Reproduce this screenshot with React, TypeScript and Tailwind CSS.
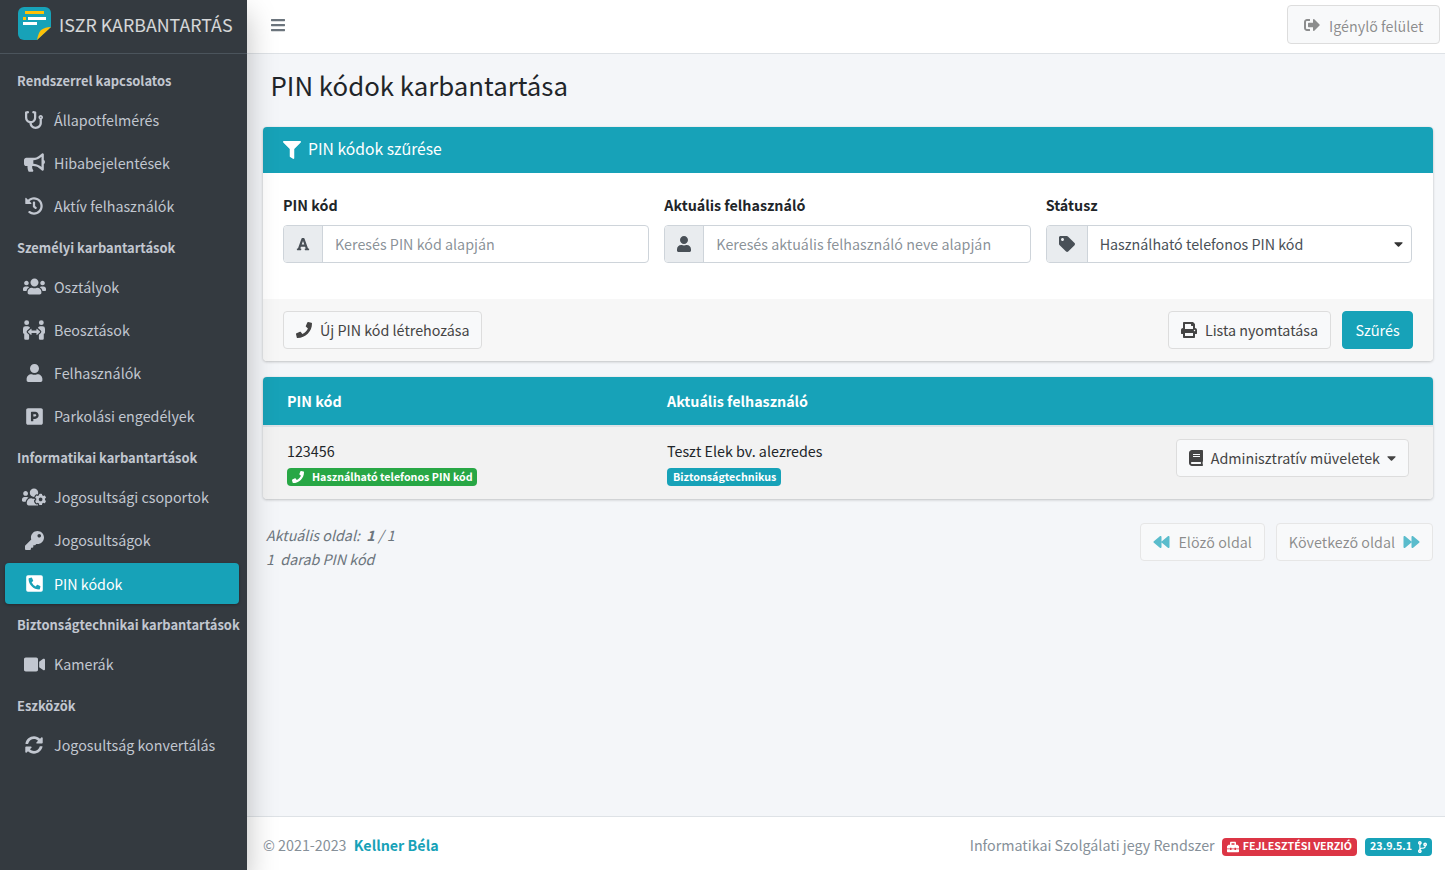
import type { ReactNode } from 'react';
import {
  FaBackward, FaBars, FaBook, FaBullhorn, FaCaretDown, FaCodeBranch, FaFilter, FaFont, FaForward, FaHistory, FaKey,
  FaParking, FaPeopleArrows, FaPhone, FaPhoneSquareAlt, FaPrint, FaSignOutAlt, FaStethoscope, FaSyncAlt, FaTag,
  FaToolbox, FaUser, FaUsers, FaUsersCog, FaVideo,
} from 'react-icons/fa';

const nav: { title: string; items: { label: string; icon: ReactNode; active?: boolean }[] }[] = [
  {
    title: 'Rendszerrel kapcsolatos',
    items: [
      { label: 'Állapotfelmérés', icon: <FaStethoscope className="w-[18px] h-[18px]" /> },
      { label: 'Hibabejelentések', icon: <FaBullhorn className="w-[21px] h-[21px]" /> },
      { label: 'Aktív felhasználók', icon: <FaHistory className="w-[18px] h-[18px]" /> },
    ],
  },
  {
    title: 'Személyi karbantartások',
    items: [
      { label: 'Osztályok', icon: <FaUsers className="w-[23px] h-[23px]" /> },
      { label: 'Beosztások', icon: <FaPeopleArrows className="w-[22px] h-[22px]" /> },
      { label: 'Felhasználók', icon: <FaUser className="w-[17px] h-[18px]" /> },
      { label: 'Parkolási engedélyek', icon: <FaParking className="w-[17px] h-[19px]" /> },
    ],
  },
  {
    title: 'Informatikai karbantartások',
    items: [
      { label: 'Jogosultsági csoportok', icon: <FaUsersCog className="w-[24px] h-[24px]" /> },
      { label: 'Jogosultságok', icon: <FaKey className="w-[19px] h-[19px]" /> },
      { label: 'PIN kódok', icon: <FaPhoneSquareAlt className="w-[17px] h-[19px]" />, active: true },
    ],
  },
  {
    title: 'Biztonságtechnikai karbantartások',
    items: [{ label: 'Kamerák', icon: <FaVideo className="w-[21px] h-[21px]" /> }],
  },
  {
    title: 'Eszközök',
    items: [{ label: 'Jogosultság konvertálás', icon: <FaSyncAlt className="w-[18px] h-[18px]" /> }],
  },
];

function Logo() {
  return (
    <svg viewBox="0 0 33 33" className="w-[33px] h-[33px] shrink-0 mb-[6px]">
      <path d="M6 0h21a6 6 0 0 1 6 6v14L19 33H6a6 6 0 0 1-6-6V6a6 6 0 0 1 6-6z" fill="#17a2b8" />
      <path d="M33 20L19 33C20 28 21 25 23 23C26 21 29 20 33 20z" fill="#ffc107" />
      <rect x="7" y="4" width="19" height="3" fill="#ffc107" />
      <rect x="5" y="10" width="3" height="3" fill="#ffc107" />
      <rect x="10" y="10" width="18" height="3" fill="#fff" />
      <rect x="5" y="15" width="14" height="3" fill="#fff" />
    </svg>
  );
}

function Sidebar() {
  return (
    <aside className="w-[247px] shrink-0 bg-[#343a40] flex flex-col shadow-[0_14px_28px_rgba(0,0,0,0.25)] z-10">
      <div className="h-[54px] flex items-center pl-[18px] border-b border-[#4b545c]">
        <Logo />
        <span className="ml-2 mb-[6px] text-[17.8px] leading-[30px] text-white/80 whitespace-nowrap">ISZR KARBANTARTÁS</span>
      </div>
      <nav className="pt-2 pl-[5px] pr-2">
        {nav.map((group) => (
          <div key={group.title}>
            <div className="h-[37.6px] pl-3 pb-px flex items-center text-[12.9px] font-bold text-[#c2c7d0] whitespace-nowrap">{group.title}</div>
            {group.items.map((item) => (
              <div
                key={item.label}
                className={`h-[40.2px] mb-[3px] flex items-center rounded ${item.active ? 'bg-[#17a2b8] text-white shadow-[0_1px_3px_rgba(0,0,0,0.3)]' : 'text-[#c2c7d0]'}`}
              >
                <span className="w-[49px] pl-[11px] pr-[2px] flex justify-center shrink-0">{item.icon}</span>
                <span className="text-[14.3px] leading-6">{item.label}</span>
              </div>
            ))}
          </div>
        ))}
      </nav>
    </aside>
  );
}

function Field({ label, icon, addonWidth, children }: { label: string; icon: ReactNode; addonWidth: string; children: ReactNode }) {
  return (
    <div className="flex-1 min-w-0">
      <label className="block text-[14.3px] leading-6 font-bold text-[#212529] mb-2">{label}</label>
      <div className="flex h-[38px] rounded border border-[#ced4da] overflow-hidden bg-white text-[14.3px]">
        <span className={`${addonWidth} shrink-0 bg-[#e9ecef] border-r border-[#ced4da] flex items-center justify-center text-[#495057]`}>{icon}</span>
        {children}
      </div>
    </div>
  );
}

function Button({ children, className = '' }: { children: ReactNode; className?: string }) {
  return (
    <button className={`h-[38px] px-3 rounded border flex items-center text-[14.3px] leading-6 whitespace-nowrap ${className}`}>{children}</button>
  );
}

const lightBtn = 'bg-[#f8f9fa] border-[#dddddd] text-[#444444]';

export default function App() {
  return (
    <div className="flex h-[870px] overflow-hidden bg-[#f4f6f9] text-[#212529] font-['Noto_Sans_CJK_SC','Noto_Sans',sans-serif]">
      <Sidebar />
      <div className="flex-1 min-w-0 flex flex-col">
        <header className="h-[54px] shrink-0 bg-white border-b border-[#dee2e6] flex items-center justify-between pl-[23px] pr-[5px] pb-1">
          <FaBars className="w-4 h-4 text-[#6c757d]" />
          <button className="h-[39px] w-[153px] rounded border border-[#dddddd] bg-[#f8f9fa] flex items-center pl-4 gap-[9px] text-[14.3px] text-[#444444]/60">
            <FaSignOutAlt className="w-4 h-4" />
            <span className="pt-[2px]">Igénylő felület</span>
          </button>
        </header>

        <main className="flex-1 min-h-0 pl-4 pr-3">
          <h1 className="text-[25.8px] leading-[34px] pl-[7.5px] pt-[14px] mb-[25px] text-[#212529]">PIN kódok karbantartása</h1>

          <section className="rounded overflow-hidden bg-white shadow-[0_0_1px_rgba(0,0,0,0.125),0_1px_3px_rgba(0,0,0,0.2)] mb-4">
            <div className="h-[46px] bg-[#17a2b8] text-white flex items-center pl-5 text-[15.7px]">
              <FaFilter className="w-[18px] h-[18px] mr-[7px]" />
              <span className="pb-[2px]">PIN kódok szűrése</span>
            </div>
            <div className="flex gap-[15px] pl-5 pr-[21px] pt-5 pb-9">
              <Field label="PIN kód" icon={<FaFont className="w-[14px] h-[14px]" />} addonWidth="w-[39px]">
                <span className="flex-1 pl-3 flex items-center text-[#6c757d]/80">Keresés PIN kód alapján</span>
              </Field>
              <Field label="Aktuális felhasználó" icon={<FaUser className="w-[14px] h-[16px]" />} addonWidth="w-[39px]">
                <span className="flex-1 pl-3 flex items-center text-[#6c757d]/80">Keresés aktuális felhasználó neve alapján</span>
              </Field>
              <Field label="Státusz" icon={<FaTag className="w-4 h-4" />} addonWidth="w-[41px]">
                <span className="flex-1 pl-3 flex items-center justify-between pr-2 text-[#495057]">
                  Használható telefonos PIN kód
                  <FaCaretDown className="w-[9px] h-[14px] text-[#333333]" />
                </span>
              </Field>
            </div>
            <div className="h-[62px] bg-[#f7f7f7] flex items-center justify-between px-5">
              <Button className={`${lightBtn} pr-[11px]`}>
                <FaPhone className="w-4 h-4 mr-2" />
                Új PIN kód létrehozása
              </Button>
              <div className="flex gap-[11px]">
                <Button className={lightBtn}>
                  <FaPrint className="w-4 h-4 mr-2" />
                  Lista nyomtatása
                </Button>
                <Button className="bg-[#17a2b8] border-[#17a2b8] text-white w-[71px] justify-center">Szűrés</Button>
              </div>
            </div>
          </section>

          <section className="rounded overflow-hidden shadow-[0_0_1px_rgba(0,0,0,0.125),0_1px_3px_rgba(0,0,0,0.2)] mb-6">
            <div className="h-[48px] bg-[#17a2b8] text-white font-bold flex items-center text-[14.3px]">
              <span className="w-[404px] pl-6">PIN kód</span>
              <span>Aktuális felhasználó</span>
            </div>
            <div className="h-[74px] bg-[#f2f2f2] border-t-2 border-[#dee2e6] flex items-center text-[14.3px]">
              <div className="w-[404px] pl-6">
                <div className="leading-[22px] mb-[6px]">123456</div>
                <span className="flex w-fit items-center h-[18px] pl-[5px] pr-[4px] rounded bg-[#28a745] text-white text-[10.7px] font-bold">
                  <FaPhone className="w-3 h-3 mr-[8px]" />
                  Használható telefonos PIN kód
                </span>
              </div>
              <div className="flex-1">
                <div className="leading-[22px] mb-[6px]">Teszt Elek bv. alezredes</div>
                <span className="flex w-fit items-center h-[18px] pl-[6px] pr-[5px] rounded bg-[#17a2b8] text-white text-[10.7px] font-bold">Biztonságtechnikus</span>
              </div>
              <Button className={`${lightBtn} mr-6 mb-[10px]`}>
                <FaBook className="w-[14px] h-4 mr-2" />
                Adminisztratív müveletek
                <FaCaretDown className="w-[9px] h-[14px] ml-[7px]" />
              </Button>
            </div>
          </section>

          <div className="flex justify-between pl-[3px]">
            <div className="italic text-[#6c757d] text-[14.3px] leading-6">
              <div>Aktuális oldal:&nbsp; <b>1</b> / 1</div>
              <div>1&nbsp; darab PIN kód</div>
            </div>
            <div className="flex gap-[11px] h-[38px]">
              <Button className="bg-[#f8f9fa] border-[#e6e6e6] text-[#444444]/60">
                <FaBackward className="w-[17px] h-4 mr-2 text-[#17a2b8]/70" />
                Elöző oldal
              </Button>
              <Button className="bg-[#f8f9fa] border-[#e6e6e6] text-[#444444]/60">
                Következő oldal
                <FaForward className="w-[17px] h-4 ml-2 text-[#17a2b8]/70" />
              </Button>
            </div>
          </div>
        </main>

        <footer className="h-[54px] shrink-0 bg-white border-t border-[#dee2e6] flex items-center justify-between pl-4 pr-[13px] pt-[2px] text-[14.3px] text-[#869099]">
          <div>
            © 2021-2023 <b className="text-[#17a2b8] ml-1">Kellner Béla</b>
          </div>
          <div className="flex items-center">
            <span className="mr-[7px]">Informatikai Szolgálati jegy Rendszer</span>
            <span className="inline-flex items-center h-[18px] mt-[4px] px-[5px] rounded bg-[#dc3545] text-white text-[10.7px] font-bold mr-2">
              <FaToolbox className="w-3 h-3 mr-1" />
              FEJLESZTÉSI VERZIÓ
            </span>
            <span className="inline-flex items-center h-[18px] mt-[4px] px-[5px] rounded bg-[#17a2b8] text-white text-[10.7px] font-bold">
              23.9.5.1
              <FaCodeBranch className="w-[9px] h-3 ml-[6px]" />
            </span>
          </div>
        </footer>
      </div>
    </div>
  );
}
